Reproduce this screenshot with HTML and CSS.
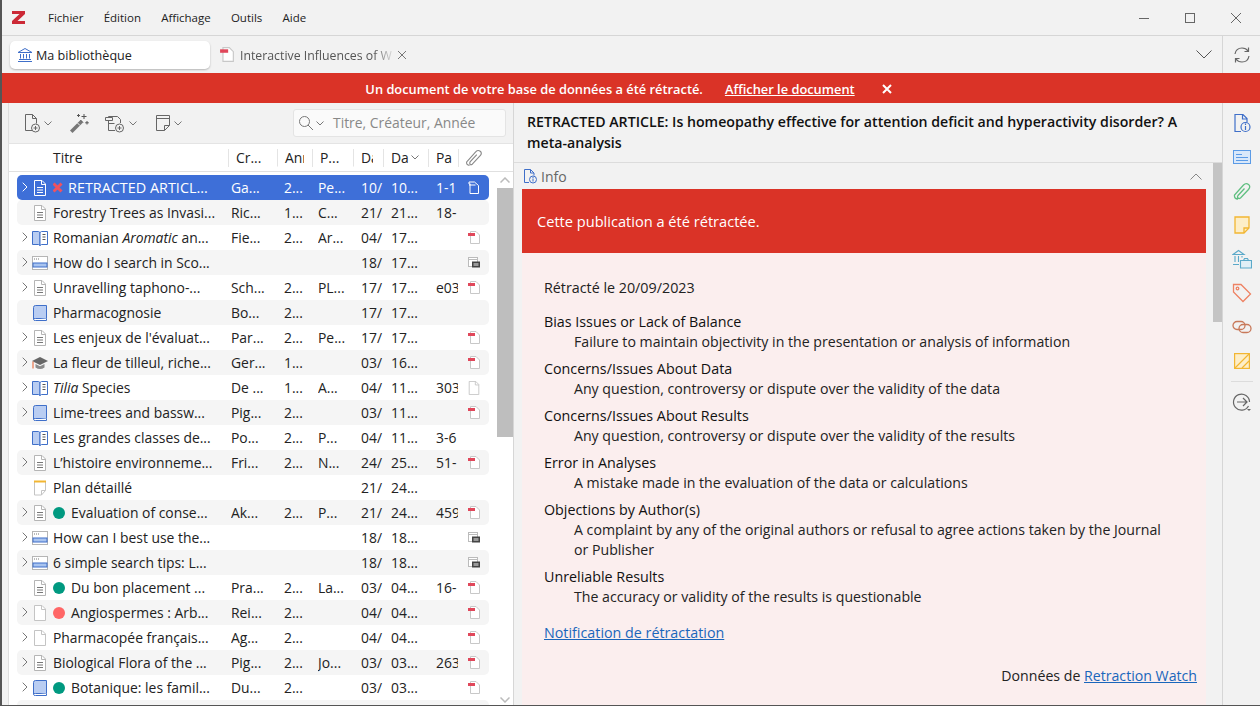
FILE: index.html
```html
<!DOCTYPE html>
<html lang="fr">

<head>
    <meta charset="UTF-8">
    <title>Zotero</title>
    <link rel="stylesheet" href="styles.css">
</head>

<body>
    <svg class="defs" width="0" height="0">
        <symbol id="chevR" viewBox="0 0 6 10"><path d="M.7.7l4.300 4.300-4.300 4.300" fill="none" stroke="currentColor"/></symbol>
        <symbol id="doc" viewBox="0 0 16 16"><path d="M2.500 .5h7.500l3.500 3.500v11.500h-11z" fill="#fff" stroke="#b5b5b5"/><path d="M9.500 .5v4h4" fill="none" stroke="#b5b5b5"/><path d="M5 7.500h6M5 10h6M5 12.500h6" stroke="#777"/></symbol>
        <symbol id="docSel" viewBox="0 0 16 16"><path d="M2.500 .5h7.500l3.500 3.500v11.500h-11z" fill="none" stroke="#fff"/><path d="M9.500 .5v4h4" fill="none" stroke="#fff"/><path d="M5 7.500h6M5 10h6M5 12.500h6" stroke="#fff"/></symbol>
        <symbol id="page" viewBox="0 0 16 16"><path d="M2.500 .5h7.500l3.500 3.500v11.500h-11z" fill="#fff" stroke="#c4c4c4"/><path d="M9.500 .5v4h4" fill="none" stroke="#c4c4c4"/></symbol>
        <symbol id="book" viewBox="0 0 16 16"><path d="M3.500 .5h11v13h-11q-2 0-2 1v-12q0-2 2-2z" fill="#b9cdf2" stroke="#3f6fc9"/><path d="M1.500 14.500q0 1 2 1h11v-2" fill="#fff" stroke="#3f6fc9"/></symbol>
        <symbol id="section" viewBox="0 0 16 16"><path d="M.5 1.500h6l1.500 1v13l-1.500-1h-6z" fill="#b9cdf2" stroke="#3f6fc9"/><path d="M8 2.500l1.500-1h6v13h-6l-1.500 1z" fill="#fff" stroke="#3f6fc9"/><path d="M10.500 4.500h3M10.500 7h3M10.500 9.500h3" stroke="#555"/></symbol>
        <symbol id="web" viewBox="0 0 16 16"><rect x=".5" y="1.500" width="15" height="13" fill="#fff" stroke="#b5b5b5"/><path d="M2 4h1M4 4h1M6 4h1" stroke="#777"/><rect x="1" y="8" width="14" height="4" fill="#a9c4ef" stroke="#3f6fc9"/></symbol>
        <symbol id="thesis" viewBox="0 0 16 16"><path d="M0 6l8-4 8 4-8 4z" fill="#666"/><path d="M3.500 9v3.500q4.500 3 9 0v-3.500l-4.500 2.300z" fill="#8a8a8a"/><path d="M1 6.500v7" stroke="#e8734a" stroke-width="1.200"/></symbol>
        <symbol id="note" viewBox="0 0 16 16"><path d="M2.500 1.500h11v9l-4 4.500h-7z" fill="#fff" stroke="#c4c4c4"/><path d="M2 1.500h12" stroke="#f2b632" stroke-width="2"/><path d="M13.500 10.500h-4v4.500" fill="none" stroke="#c4c4c4"/></symbol>
        <symbol id="pdf" viewBox="0 0 12 13"><path d="M2.500 .5h5.500l3.500 3.500v8.500h-9z" fill="#fff" stroke="#c8c8c8"/><rect x="0" y="2" width="7" height="3" fill="#e0475a"/></symbol>
        <symbol id="pdfSel" viewBox="0 0 12 13"><path d="M2.500 3h-1.500v-2h5.500l4 3.500v8h-8.500v-9.500" fill="none" stroke="#fff"/><path d="M1 4h6.500" stroke="#fff"/></symbol>
        <symbol id="snap" viewBox="0 0 12 13"><rect x=".5" y="1.500" width="9" height="9" fill="#fff" stroke="#bbb"/><path d="M1 3.500h8" stroke="#bbb"/><rect x="4" y="5.500" width="8" height="6" fill="#444"/><rect x="5.500" y="7" width="5" height="3" fill="#999"/></symbol>
        <symbol id="chevD" viewBox="0 0 8 5"><path d="M.5.5l3.500 3.500 3.500-3.500" fill="none" stroke="currentColor"/></symbol>
    </svg>

    <div class="titleBar">
        <svg class="logo" width="13" height="13" viewBox="0 0 13 13"><path d="M0 0h13v3l-7.500 7h7.500v3h-13v-3l7.500-7h-7.500z" fill="#cc2936"/></svg>
        <nav class="menu">
            <span>Fichier</span>
            <span>Édition</span>
            <span>Affichage</span>
            <span>Outils</span>
            <span>Aide</span>
        </nav>
        <div class="windowButtons">
            <svg width="12" height="12" viewBox="0 0 12 12"><path d="M1 6.500h10" stroke="#666"/></svg>
            <svg width="12" height="12" viewBox="0 0 12 12"><rect x="1.500" y="1.500" width="9" height="9" fill="none" stroke="#666"/></svg>
            <svg width="12" height="12" viewBox="0 0 12 12"><path d="M1 1l10 10M11 1l-10 10" stroke="#666"/></svg>
        </div>
    </div>

    <div class="tabBar">
        <div class="tab tabActive">
            <svg width="16" height="16" viewBox="0 0 16 16" fill="none" stroke="#3f6fc9"><path d="M1 5.500l7-4 7 4zM1 14.500h14M2 12.500h12M3.500 7v4.500M6.500 7v4.500M9.500 7v4.500M12.500 7v4.500"/></svg>
            <span>Ma bibliothèque</span>
        </div>
        <div class="tab">
            <svg width="14" height="15" viewBox="0 0 12 13"><use href="#pdf"/></svg>
            <span class="tabFade">Interactive Influences of W</span>
            <svg class="tabClose" width="10" height="10" viewBox="0 0 10 10"><path d="M1 1l8 8M9 1l-8 8" stroke="#777"/></svg>
        </div>
        <svg class="tabMenu" width="16" height="9" viewBox="0 0 16 9"><path d="M.5.5l7.500 7.500 7.500-7.500" fill="none" stroke="#555"/></svg>
        <div class="syncBox">
            <svg width="18" height="18" viewBox="0 0 18 18" fill="none" stroke="#666" stroke-width="1.200"><path d="M2 8q1-6 7-6 4 0 6 3M15.500 1.500v4h-4M16 10q-1 6-7 6-4 0-6-3M2.500 16.500v-4h4"/></svg>
        </div>
    </div>

    <div class="banner">
        <span>Un document de votre base de données a été rétracté.</span>
        <a>Afficher le document</a>
        <svg width="10" height="10" viewBox="0 0 10 10"><path d="M1 1l8 8M9 1l-8 8" stroke="#fff" stroke-width="2"/></svg>
    </div>

    <div class="main">
        <section class="listPane">
            <div class="toolbar">
                <div class="toolIcons">
                    <span class="toolBtn">
                        <svg width="18" height="20" viewBox="0 0 18 20" fill="none" stroke="#666"><path d="M10 17.500h-7.500v-16h7l4 4v5M9.500 1.500v4h4"/><circle cx="12.500" cy="15" r="4" fill="#f2f2f2"/><path d="M10.500 15h4M12.500 13v4"/></svg>
                        <svg class="chev" width="8" height="5"><use href="#chevD"/></svg>
                    </span>
                    <span class="toolBtn wand">
                        <svg width="22" height="22" viewBox="0 0 22 22" fill="none"><path d="M2 18.500l10.500-10.500 2.500 2.500-10.500 10.500z" fill="#777"/><path d="M9.500 11l2.500 2.500" stroke="#f2f2f2"/><path d="M12.500 8l2.500 2.500" stroke="#555"/><path d="M16 2v5M13.500 4.500h5M19 9v3.500M17.200 10.800h3.600M10.500 2v3M9 3.500h3" stroke="#555"/></svg>
                    </span>
                    <span class="toolBtn addBtn">
                        <svg width="22" height="20" viewBox="0 0 22 20" fill="none" stroke="#666"><path d="M11 17.500h-6.500v-14h9l3 3v3.500"/><path d="M1.500 4.500h7v3h-7z" fill="#f2f2f2"/><path d="M4.500 10.500h6"/><circle cx="15.500" cy="15" r="4" fill="#f2f2f2"/><path d="M13.500 15h4M15.500 13v4"/></svg>
                        <svg class="chev" width="8" height="5"><use href="#chevD"/></svg>
                    </span>
                    <span class="toolBtn">
                        <svg width="16" height="18" viewBox="0 0 16 18" fill="none" stroke="#666"><path d="M1.500 1.500h13v10l-5 5h-8z"/><path d="M1.500 4.500h13M14.500 11.500h-5v5"/></svg>
                        <svg class="chev" width="8" height="5"><use href="#chevD"/></svg>
                    </span>
                </div>
                <div class="searchBox">
                    <svg width="16" height="16" viewBox="0 0 16 16" fill="none" stroke="#777"><circle cx="6.500" cy="6.500" r="5"/><path d="M10 10l5 5"/></svg>
                    <svg class="chev" width="8" height="5"><use href="#chevD"/></svg>
                    <span>Titre, Créateur, Année</span>
                </div>
            </div>

            <div class="colHead">
                <span>Titre</span>
                <span>Cr...</span>
                <span class="clipNarrow">Ann</span>
                <span>P...</span>
                <span class="clipWide">Da</span>
                <span class="sortCol">Da<svg class="chev" width="8" height="5"><use href="#chevD"/></svg></span>
                <span>Pa</span>
                <span class="clipCol"><svg width="18" height="18" viewBox="0 0 16 16" fill="none" stroke="#888"><path d="M4 14.500q-3 0-2.500-3l8-9q2-2 4-.5t0 4l-7 7.500q-1.500 1-2 0t0-2l6-6.500"/></svg></span>
            </div>

            <div class="listBody">
                <div class="rows">
                    <div class="row rowSel">
                        <span class="itemCell"><i class="twisty"><svg width="6" height="10"><use href="#chevR"/></svg></i><svg width="16" height="16"><use href="#docSel"/></svg></span>
                        <span class="cellTitle"><svg class="retract" width="11" height="11" viewBox="0 0 11 11"><path d="M1.500 1.500l8 8M9.500 1.500l-8 8" stroke="#f0525f" stroke-width="3"/></svg>RETRACTED ARTICL...</span>
                        <span>Ga...</span><span>2...</span><span>Pe...</span><span>10/</span><span>10...</span><span>1-1</span>
                        <span class="att"><svg width="12" height="13"><use href="#pdfSel"/></svg></span>
                    </div>
                    <div class="row">
                        <span class="itemCell"><i class="twisty"></i><svg width="16" height="16"><use href="#doc"/></svg></span>
                        <span class="cellTitle">Forestry Trees as Invasi...</span>
                        <span>Ric...</span><span>1...</span><span>C...</span><span>21/</span><span>21...</span><span>18-</span>
                        <span class="att"></span>
                    </div>
                    <div class="row">
                        <span class="itemCell"><i class="twisty"><svg width="6" height="10"><use href="#chevR"/></svg></i><svg width="16" height="16"><use href="#section"/></svg></span>
                        <span class="cellTitle">Romanian <em>Aromatic</em> an...</span>
                        <span>Fie...</span><span>2...</span><span>Ar...</span><span>04/</span><span>17...</span><span></span>
                        <span class="att"><svg width="12" height="13"><use href="#pdf"/></svg></span>
                    </div>
                    <div class="row">
                        <span class="itemCell"><i class="twisty"><svg width="6" height="10"><use href="#chevR"/></svg></i><svg width="16" height="16"><use href="#web"/></svg></span>
                        <span class="cellTitle">How do I search in Sco...</span>
                        <span></span><span></span><span></span><span>18/</span><span>17...</span><span></span>
                        <span class="att"><svg width="12" height="13"><use href="#snap"/></svg></span>
                    </div>
                    <div class="row">
                        <span class="itemCell"><i class="twisty"><svg width="6" height="10"><use href="#chevR"/></svg></i><svg width="16" height="16"><use href="#doc"/></svg></span>
                        <span class="cellTitle">Unravelling taphono-...</span>
                        <span>Sch...</span><span>2...</span><span>PL...</span><span>17/</span><span>17...</span><span>e03</span>
                        <span class="att"><svg width="12" height="13"><use href="#pdf"/></svg></span>
                    </div>
                    <div class="row">
                        <span class="itemCell"><i class="twisty"></i><svg width="16" height="16"><use href="#book"/></svg></span>
                        <span class="cellTitle">Pharmacognosie</span>
                        <span>Bo...</span><span>2...</span><span></span><span>17/</span><span>17...</span><span></span>
                        <span class="att"></span>
                    </div>
                    <div class="row">
                        <span class="itemCell"><i class="twisty"><svg width="6" height="10"><use href="#chevR"/></svg></i><svg width="16" height="16"><use href="#doc"/></svg></span>
                        <span class="cellTitle">Les enjeux de l'évaluat...</span>
                        <span>Par...</span><span>2...</span><span>Pe...</span><span>17/</span><span>17...</span><span></span>
                        <span class="att"><svg width="12" height="13"><use href="#pdf"/></svg></span>
                    </div>
                    <div class="row">
                        <span class="itemCell"><i class="twisty"><svg width="6" height="10"><use href="#chevR"/></svg></i><svg width="16" height="16"><use href="#thesis"/></svg></span>
                        <span class="cellTitle">La fleur de tilleul, riche...</span>
                        <span>Ger...</span><span>1...</span><span></span><span>03/</span><span>16...</span><span></span>
                        <span class="att"><svg width="12" height="13"><use href="#pdf"/></svg></span>
                    </div>
                    <div class="row">
                        <span class="itemCell"><i class="twisty"><svg width="6" height="10"><use href="#chevR"/></svg></i><svg width="16" height="16"><use href="#section"/></svg></span>
                        <span class="cellTitle"><em>Tilia</em> Species</span>
                        <span>De ...</span><span>1...</span><span>A...</span><span>04/</span><span>11...</span><span>303</span>
                        <span class="att"><svg width="14" height="14" viewBox="0 0 16 16"><use href="#page"/></svg></span>
                    </div>
                    <div class="row">
                        <span class="itemCell"><i class="twisty"><svg width="6" height="10"><use href="#chevR"/></svg></i><svg width="16" height="16"><use href="#book"/></svg></span>
                        <span class="cellTitle">Lime-trees and bassw...</span>
                        <span>Pig...</span><span>2...</span><span></span><span>03/</span><span>11...</span><span></span>
                        <span class="att"><svg width="12" height="13"><use href="#pdf"/></svg></span>
                    </div>
                    <div class="row">
                        <span class="itemCell"><i class="twisty"></i><svg width="16" height="16"><use href="#section"/></svg></span>
                        <span class="cellTitle">Les grandes classes de...</span>
                        <span>Po...</span><span>2...</span><span>P...</span><span>04/</span><span>11...</span><span>3-6</span>
                        <span class="att"></span>
                    </div>
                    <div class="row">
                        <span class="itemCell"><i class="twisty"><svg width="6" height="10"><use href="#chevR"/></svg></i><svg width="16" height="16"><use href="#doc"/></svg></span>
                        <span class="cellTitle">L’histoire environneme...</span>
                        <span>Fri...</span><span>2...</span><span>N...</span><span>24/</span><span>25...</span><span>51-</span>
                        <span class="att"><svg width="12" height="13"><use href="#pdf"/></svg></span>
                    </div>
                    <div class="row">
                        <span class="itemCell"><i class="twisty"></i><svg width="16" height="16"><use href="#note"/></svg></span>
                        <span class="cellTitle">Plan détaillé</span>
                        <span></span><span></span><span></span><span>21/</span><span>24...</span><span></span>
                        <span class="att"></span>
                    </div>
                    <div class="row">
                        <span class="itemCell"><i class="twisty"><svg width="6" height="10"><use href="#chevR"/></svg></i><svg width="16" height="16"><use href="#doc"/></svg></span>
                        <span class="cellTitle"><b class="dot dotGreen"></b>Evaluation of conse...</span>
                        <span>Ak...</span><span>2...</span><span>P...</span><span>21/</span><span>24...</span><span>459</span>
                        <span class="att"><svg width="12" height="13"><use href="#pdf"/></svg></span>
                    </div>
                    <div class="row">
                        <span class="itemCell"><i class="twisty"><svg width="6" height="10"><use href="#chevR"/></svg></i><svg width="16" height="16"><use href="#web"/></svg></span>
                        <span class="cellTitle">How can I best use the...</span>
                        <span></span><span></span><span></span><span>18/</span><span>18...</span><span></span>
                        <span class="att"><svg width="12" height="13"><use href="#snap"/></svg></span>
                    </div>
                    <div class="row">
                        <span class="itemCell"><i class="twisty"><svg width="6" height="10"><use href="#chevR"/></svg></i><svg width="16" height="16"><use href="#web"/></svg></span>
                        <span class="cellTitle">6 simple search tips: L...</span>
                        <span></span><span></span><span></span><span>18/</span><span>18...</span><span></span>
                        <span class="att"><svg width="12" height="13"><use href="#snap"/></svg></span>
                    </div>
                    <div class="row">
                        <span class="itemCell"><i class="twisty"></i><svg width="16" height="16"><use href="#doc"/></svg></span>
                        <span class="cellTitle"><b class="dot dotGreen"></b>Du bon placement ...</span>
                        <span>Pra...</span><span>2...</span><span>La...</span><span>03/</span><span>04...</span><span>16-</span>
                        <span class="att"><svg width="12" height="13"><use href="#pdf"/></svg></span>
                    </div>
                    <div class="row">
                        <span class="itemCell"><i class="twisty"><svg width="6" height="10"><use href="#chevR"/></svg></i><svg width="16" height="16"><use href="#page"/></svg></span>
                        <span class="cellTitle"><b class="dot dotRed"></b>Angiospermes : Arb...</span>
                        <span>Rei...</span><span>2...</span><span></span><span>04/</span><span>04...</span><span></span>
                        <span class="att"><svg width="12" height="13"><use href="#pdf"/></svg></span>
                    </div>
                    <div class="row">
                        <span class="itemCell"><i class="twisty"><svg width="6" height="10"><use href="#chevR"/></svg></i><svg width="16" height="16"><use href="#page"/></svg></span>
                        <span class="cellTitle">Pharmacopée français...</span>
                        <span>Ag...</span><span>2...</span><span></span><span>04/</span><span>04...</span><span></span>
                        <span class="att"><svg width="12" height="13"><use href="#pdf"/></svg></span>
                    </div>
                    <div class="row">
                        <span class="itemCell"><i class="twisty"><svg width="6" height="10"><use href="#chevR"/></svg></i><svg width="16" height="16"><use href="#doc"/></svg></span>
                        <span class="cellTitle">Biological Flora of the ...</span>
                        <span>Pig...</span><span>2...</span><span>Jo...</span><span>03/</span><span>03...</span><span>263</span>
                        <span class="att"><svg width="12" height="13"><use href="#pdf"/></svg></span>
                    </div>
                    <div class="row">
                        <span class="itemCell"><i class="twisty"><svg width="6" height="10"><use href="#chevR"/></svg></i><svg width="16" height="16"><use href="#book"/></svg></span>
                        <span class="cellTitle"><b class="dot dotGreen"></b>Botanique: les famil...</span>
                        <span>Du...</span><span>2...</span><span></span><span>03/</span><span>03...</span><span></span>
                        <span class="att"><svg width="12" height="13"><use href="#pdf"/></svg></span>
                    </div>
                    <div class="row"></div>
                </div>
                <div class="listScroll">
                    <svg width="10" height="6" viewBox="0 0 10 6"><path d="M.5 5.500l4.500-4.500 4.500 4.500" fill="none" stroke="#bbb" stroke-width="1.500"/></svg>
                    <div class="thumb"></div>
                    <svg class="scrollDown" width="10" height="6" viewBox="0 0 10 6"><path d="M.5.5l4.500 4.500 4.500-4.500" fill="none" stroke="#bbb" stroke-width="1.500"/></svg>
                </div>
            </div>
        </section>

        <section class="detailPane">
            <h1 class="itemTitle">RETRACTED ARTICLE: Is homeopathy effective for attention deficit and hyperactivity disorder? A meta-analysis</h1>
            <div class="detailBody">
                <div class="detailScrollArea">
                    <div class="infoHead">
                        <svg width="16" height="16" viewBox="0 0 16 16" fill="none" stroke="#3f6fc9"><path d="M7 14.500h-4.500v-13h6l3.500 3.500v2.500M8.500 1.500v3.500h3.500"/><circle cx="11" cy="11.500" r="3.500" fill="#f2f2f2"/><path d="M11 10.500v3M11 9v1"/></svg>
                        <span>Info</span>
                        <svg class="infoToggle" width="12" height="7" viewBox="0 0 12 7"><path d="M.5 6.500l5.500-5.500 5.500 5.500" fill="none" stroke="#888"/></svg>
                    </div>
                    <div class="retractHead">Cette publication a été rétractée.</div>
                    <div class="retractBody">
                        <p class="retractDate">Rétracté le 20/09/2023</p>
                        <dl class="reasons">
                            <dt>Bias Issues or Lack of Balance</dt>
                            <dd>Failure to maintain objectivity in the presentation or analysis of information</dd>
                            <dt>Concerns/Issues About Data</dt>
                            <dd>Any question, controversy or dispute over the validity of the data</dd>
                            <dt>Concerns/Issues About Results</dt>
                            <dd>Any question, controversy or dispute over the validity of the results</dd>
                            <dt>Error in Analyses</dt>
                            <dd>A mistake made in the evaluation of the data or calculations</dd>
                            <dt>Objections by Author(s)</dt>
                            <dd>A complaint by any of the original authors or refusal to agree actions taken by the Journal or Publisher</dd>
                            <dt>Unreliable Results</dt>
                            <dd>The accuracy or validity of the results is questionable</dd>
                        </dl>
                        <p class="notice"><a>Notification de rétractation</a></p>
                        <p class="source">Données de <a>Retraction Watch</a></p>
                    </div>
                </div>
                <div class="detailScroll"><div class="detailThumb"></div></div>
            </div>
        </section>

        <aside class="sideBar">
            <svg width="18" height="20" viewBox="0 0 18 20" fill="none" stroke="#3f6fc9" stroke-width="1.200"><path d="M8 18.500h-6v-17h8l4 4v3.500M9.500 1.500v4.500h4.500"/><circle cx="12.500" cy="14" r="4.500" fill="#f2f2f2"/><path d="M12.500 13v4M12.500 10.500v1.500"/></svg>
            <svg width="18" height="14" viewBox="0 0 18 14" fill="none" stroke="#5b9be6"><rect x=".5" y=".5" width="17" height="13" fill="#d9e8fa"/><path d="M3 4.500h6M3 7.500h12M3 10.500h12"/></svg>
            <svg width="18" height="18" viewBox="0 0 18 18" fill="none" stroke="#5fbf80" stroke-width="1.300"><path d="M5 17q-4 0-3.500-4l9-10q2.500-2.500 5-.5t0 5l-8 8.500q-1.500 1-2.500 0t0-2.500l6.500-7"/></svg>
            <svg width="16" height="18" viewBox="0 0 16 18" fill="#fdeec8" stroke="#f2b632" stroke-width="1.300"><path d="M1 1h14v11l-5 5h-9z"/><path d="M15 12h-5v5" fill="none"/></svg>
            <svg width="20" height="20" viewBox="0 0 20 20" fill="none" stroke="#5aa9c9" stroke-width="1.100"><path d="M1 5.500l5.500-4 5.500 4zM1 15.500h6M3 7v6M6.500 7v6M10 7v1.500"/><path d="M8.500 11.500v7.500h11v-7.500zM8.500 11.500h3l1-2h3l1 2" fill="#e0eff6"/></svg>
            <svg width="20" height="20" viewBox="0 0 20 20" fill="none" stroke="#ee8263" stroke-width="1.300"><path d="M1.500 1.500h7.500l9.500 9.500-7.500 7.500-9.500-9.500z"/><circle cx="5.500" cy="5.500" r="1.300"/></svg>
            <svg width="20" height="14" viewBox="0 0 20 14" fill="none" stroke="#c8795a" stroke-width="1.300"><rect x="1" y="1.500" width="12" height="8" rx="4"/><rect x="7" y="4.500" width="12" height="8" rx="4"/></svg>
            <svg width="16" height="16" viewBox="0 0 16 16" fill="#fdeec8" stroke="#f2b632" stroke-width="1.200"><rect x=".6" y=".6" width="14.800" height="14.800"/><path d="M1 15l14-14M8 15l7-7" fill="none"/></svg>
            <hr class="sideRule">
            <svg class="locate" width="20" height="20" viewBox="0 0 20 20" fill="none" stroke="#666" stroke-width="1.200"><path d="M16.500 14a8 8 0 1 1 1-4M5 10h10M11 6l4 4-4 4"/><path d="M15 17h4l-2 2z" fill="#666" stroke="none"/></svg>
        </aside>
    </div>
</body>

</html>
```

FILE: styles.css
```css
html,
body {
    margin: 0;
    height: 100%;
    overflow: hidden;
}

body {
    width: 1260px;
    height: 706px;
    box-sizing: border-box;
    border-left: 2px solid #555;
    border-bottom: 1px solid #555;
    font-family: "Open Sans", "Noto Sans", sans-serif;
    font-size: 13.9px;
    color: #222;
    background: #f2f2f2;
    display: flex;
    flex-direction: column;
}

.defs {
    position: absolute;
}

svg {
    display: block;
    flex: none;
}

.chev {
    color: #777;
}

/* title bar */
.titleBar {
    height: 35px;
    display: flex;
    align-items: center;
    border-bottom: 1px solid #d6d6d6;
    padding-left: 10px;
    flex: none;
}

.menu {
    display: flex;
    gap: 20.200px;
    margin-left: 23px;
    font-size: 11.500px;
}

.windowButtons {
    margin-left: auto;
    display: flex;
    gap: 34px;
    padding-right: 18px;
}

/* tabs */
.tabBar {
    height: 37px;
    display: flex;
    align-items: center;
    padding-left: 8px;
    flex: none;
}

.tab {
    display: flex;
    align-items: center;
    gap: 6px;
    height: 28px;
    color: #555;
    font-size: 12.300px;
}

.tab span {
    padding-top: 1px;
}

.tabActive {
    width: 200px;
    box-sizing: border-box;
    padding-left: 7px;
    gap: 3px;
    background: #fff;
    border-radius: 5px;
    box-shadow: 0 1px 2px rgba(0, 0, 0, 0.25);
    color: #222;
    font-size: 12.600px;
    margin-right: 10px;
}

.tabFade {
    white-space: nowrap;
    -webkit-mask-image: linear-gradient(to right, #000 88%, rgba(0, 0, 0, 0.15) 100%);
    mask-image: linear-gradient(to right, #000 88%, rgba(0, 0, 0, 0.15) 100%);
}

.tabClose {
    margin-left: -1px;
}

.tabMenu {
    margin-left: auto;
    margin-right: 10px;
}

.syncBox {
    width: 37px;
    height: 37px;
    border-left: 1px solid #d6d6d6;
    display: flex;
    align-items: center;
    justify-content: center;
}

/* red banner */
.banner {
    height: 30px;
    box-sizing: border-box;
    padding: 1px 5px 0 0;
    background: #da3327;
    color: #fff;
    font-weight: 600;
    font-size: 12.850px;
    display: flex;
    align-items: center;
    justify-content: center;
    gap: 22px;
    flex: none;
}

.banner a {
    text-decoration: underline;
    margin-right: 5px;
}

/* main */
.main {
    flex: 1;
    display: flex;
    min-height: 0;
}

.listPane {
    width: 512px;
    flex: none;
    display: flex;
    flex-direction: column;
    border-right: 1px solid #d6d6d6;
    padding-left: 6px;
    box-sizing: border-box;
    overflow: hidden;
}

.toolbar {
    height: 40px;
    display: flex;
    align-items: center;
    justify-content: space-between;
    border-left: 1px solid #dedede;
    padding: 0 7px 0 14px;
    flex: none;
}

.toolIcons {
    display: flex;
    align-items: center;
    gap: 16px;
}

.toolBtn {
    display: flex;
    align-items: center;
    gap: 3px;
}

.addBtn {
    margin: 0 2px 0 -2px;
}

.searchBox {
    width: 213px;
    height: 28px;
    box-sizing: border-box;
    background: #fafafa;
    border: 1px solid #e4e4e4;
    border-radius: 3px;
    display: flex;
    align-items: center;
    gap: 2px;
    padding-left: 4px;
    color: #888;
}

.searchBox span {
    margin-left: 7px;
    padding-bottom: 2px;
}

.colHead,
.row {
    display: grid;
    align-items: center;
}

.colHead {
    grid-template-columns: 211px 49px 35px 41px 30px 45px 30px 31px;
    height: 29px;
    box-sizing: border-box;
    border-left: 1px solid #dedede;
    border-bottom: 1px solid #e0e0e0;
    border-top: 1px solid #e4e4e4;
    background: #fff;
    padding-left: 8px;
    flex: none;
}

.colHead span {
    padding-left: 7px;
    height: 18px;
    line-height: 17px;
    white-space: nowrap;
    overflow: hidden;
    border-left: 1px solid #e4e4e4;
}

.colHead span:first-child {
    padding-left: 36px;
    border-left: 0;
}

.colHead .clipNarrow {
    clip-path: inset(0 8px 0 0);
}

.colHead .clipWide {
    clip-path: inset(0 10px 0 0);
}

.colHead .sortCol {
    display: flex;
    align-items: center;
    gap: 2px;
}

.colHead .clipCol {
    padding-left: 6px;
}

.listBody {
    flex: 1;
    display: flex;
    min-height: 0;
    overflow: hidden;
    background: #fff;
    border-left: 1px solid #dedede;
}

.rows {
    width: 472px;
    margin-left: 8px;
    padding-top: 3px;
    flex: none;
}

.row {
    grid-template-columns: 36px 178px 53px 34px 43px 30px 45px 30px 23px;
    height: 25px;
    border-radius: 5px;
    white-space: nowrap;
}

.row:nth-child(even) {
    background: #f5f5f5;
}

.row > span {
    overflow: hidden;
}

.row > span:nth-child(8) {
    width: 22px;
}

.rowSel {
    background: #3e6fd8;
    color: #fff;
}

.rowSel .cellTitle {
    font-size: 14.400px;
}

.itemCell {
    display: flex;
    align-items: center;
}

.twisty {
    width: 15px;
    height: 12px;
    flex: none;
    color: #777;
    display: flex;
    justify-content: center;
    padding-left: 1px;
    padding-bottom: 2px;
    box-sizing: border-box;
}

.rowSel .twisty {
    color: #fff;
}

.cellTitle {
    display: flex;
    align-items: center;
    white-space: pre;
}

.retract {
    margin: 0 5px 0 -1px;
}

.dot {
    width: 12px;
    height: 12px;
    border-radius: 50%;
    margin-right: 6px;
    flex: none;
}

.dotGreen {
    background: #009980;
}

.dotRed {
    background: #ff6666;
}

.att {
    display: flex;
    justify-content: center;
    padding-right: 8px;
}

.listScroll {
    width: 16px;
    margin-left: 8px;
    flex: none;
    display: flex;
    flex-direction: column;
    align-items: center;
    padding-top: 5px;
    position: relative;
}

.thumb {
    width: 16px;
    height: 249px;
    margin-top: 5px;
    background: #bebebe;
}

.scrollDown {
    position: absolute;
    bottom: 2px;
}

/* detail pane */
.detailPane {
    width: 708px;
    flex: none;
    display: flex;
    flex-direction: column;
    min-height: 0;
}

.itemTitle {
    margin: 0;
    height: 60px;
    box-sizing: border-box;
    padding: 9px 24px 0 13px;
    font-size: 14.170px;
    font-weight: 600;
    line-height: 20.500px;
    color: #111;
    border-bottom: 1px solid #dcdcdc;
    flex: none;
}

.detailBody {
    flex: 1;
    display: flex;
    min-height: 0;
    overflow: hidden;
}

.detailScrollArea {
    width: 684px;
    margin-left: 8px;
    flex: none;
}

.infoHead {
    height: 26px;
    display: flex;
    align-items: center;
    gap: 3px;
    color: #666;
    font-size: 14px;
}

.infoToggle {
    margin-left: auto;
    margin-right: 4px;
}

.retractHead {
    height: 64px;
    display: flex;
    align-items: center;
    background: #da3327;
    color: #fff;
    padding-left: 15px;
    font-size: 14.600px;
}

.retractBody {
    background: #fbeeee;
    padding: 24px 9px 0 22px;
    height: 460px;
    font-size: 14.300px;
}

.retractDate {
    margin: 0 0 14px;
    line-height: 21px;
}

.reasons {
    margin: 0;
    line-height: 20px;
}

.reasons dt {
    color: #111;
    margin-top: 7px;
}

.reasons dd {
    margin: 0 30px;
    font-size: 14.150px;
}

.notice {
    margin: 15px 0 0;
    line-height: 21px;
}

.retractBody a {
    color: #1a66bb;
    text-decoration: underline;
}

.source {
    margin: 22px 0 0;
    text-align: right;
    line-height: 21px;
    font-size: 14.150px;
}

.detailScroll {
    width: 9px;
    margin-left: 7px;
    flex: none;
}

.detailThumb {
    height: 159px;
    background: #c4c4c4;
}

/* right icon strip */
.sideBar {
    flex: 1;
    border-left: 1px solid #d6d6d6;
    display: grid;
    grid-template-rows: repeat(8, 34px) 7px 34px;
    align-content: start;
    justify-items: center;
    align-items: center;
    padding-top: 3px;
}

.sideRule {
    width: 22px;
    margin: 0;
    border: 0;
    border-top: 1px solid #dcdcdc;
}
```
